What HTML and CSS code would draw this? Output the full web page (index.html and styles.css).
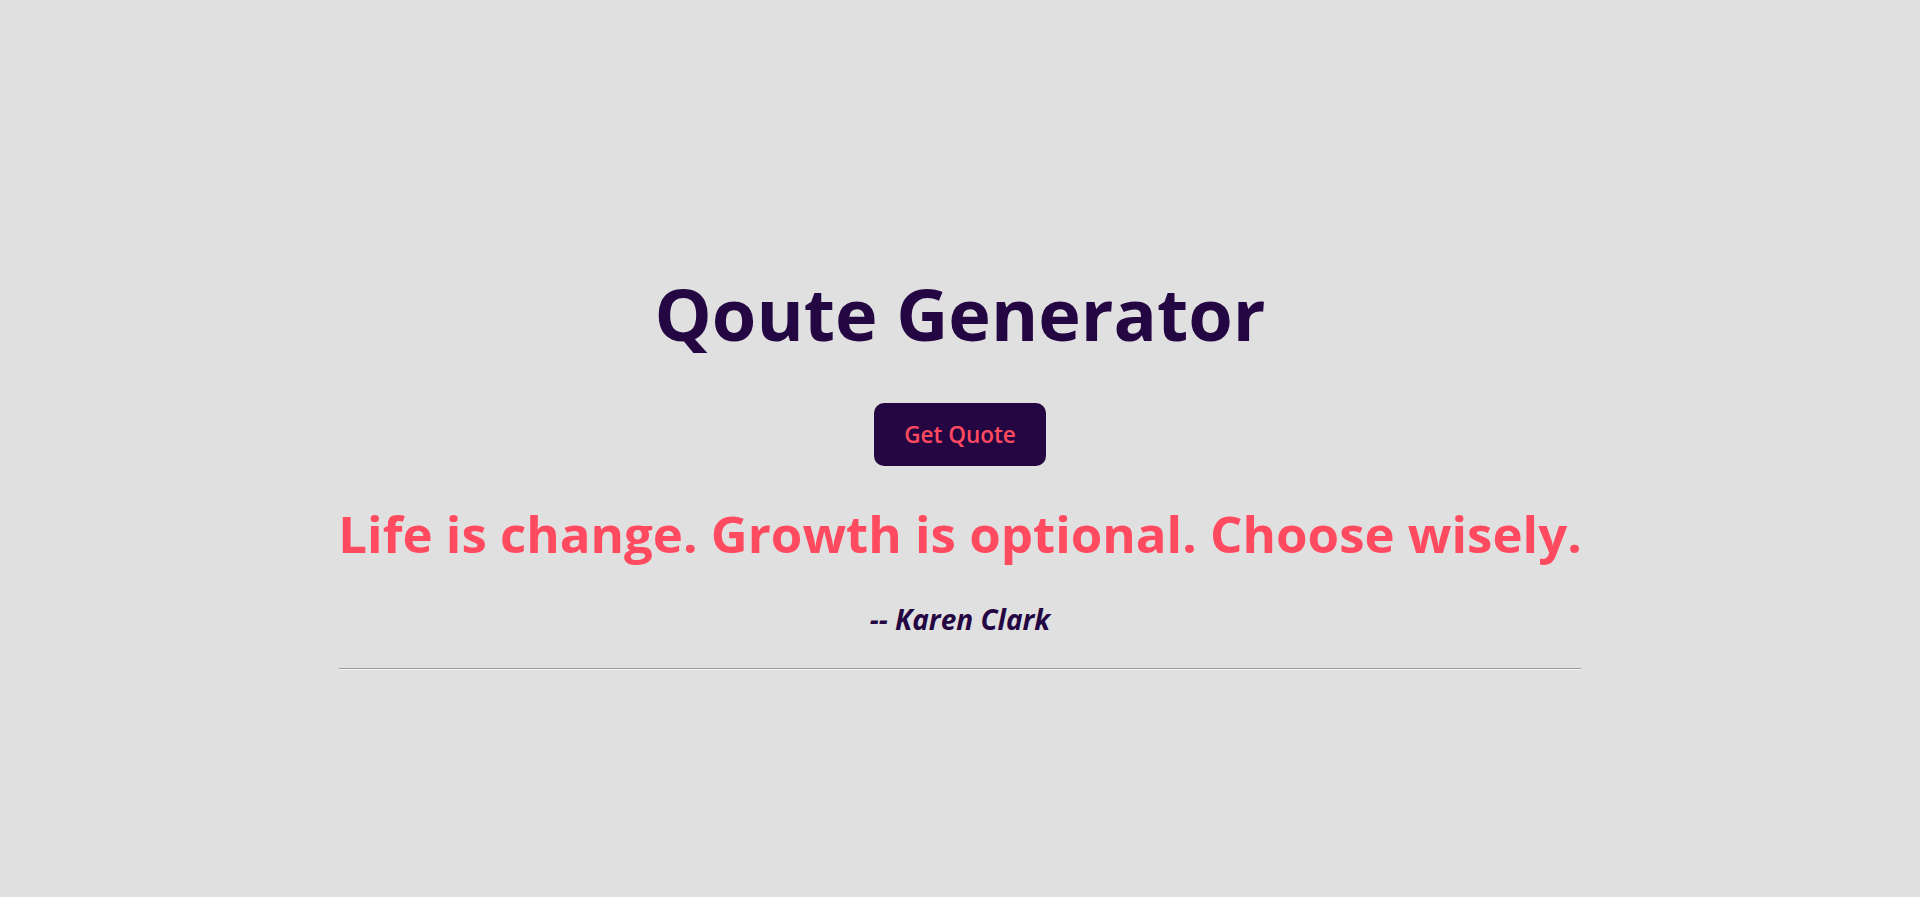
FILE: index.html
```html
<!DOCTYPE html>
<html lang="en">
<head>
<meta charset="utf-8">
<title>Qoute Generator</title>
<link rel="stylesheet" href="styles.css">
</head>
<body>
<main class="app">
  <h1 class="title">Qoute Generator</h1>
  <button class="btn" type="button">Get Quote</button>
  <h2 class="quote">Life is change. Growth is optional. Choose wisely.</h2>
  <p class="author">-- Karen Clark</p>
  <hr class="rule">
</main>
</body>
</html>
```

FILE: styles.css
```css
html, body {
  margin: 0;
  padding: 0;
}
body {
  background: #e0e0e0;
  font-family: "Open Sans", "Noto Sans", sans-serif;
  min-height: 897px;
}
.app {
  width: 1242px;
  margin: 0 auto;
  padding-top: 263px;
  display: flex;
  flex-direction: column;
  align-items: center;
}
.title {
  margin: 0;
  font-size: 72px;
  line-height: 100px;
  font-weight: 700;
  color: #240643;
}
.btn {
  margin-top: 40px;
  height: 63px;
  width: 172px;
  border: none;
  outline: none;
  border-radius: 10px;
  background: #240643;
  color: #ff4a5f;
  font-family: "Open Sans", "Noto Sans", sans-serif;
  font-size: 22.5px;
  font-weight: 600;
  padding: 0;
  cursor: pointer;
}
.quote {
  margin: 32px 0 0;
  font-size: 51px;
  line-height: 70px;
  font-weight: 700;
  color: #ff4a5f;
  text-align: center;
  white-space: nowrap;
}
.author {
  margin: 31px 0 0;
  font-size: 28px;
  line-height: 40px;
  font-weight: 700;
  font-style: italic;
  color: #240643;
}
.rule {
  align-self: stretch;
  margin: 29px 0 0;
  border: 0;
  border-top: 1px solid #9a9a9a;
  border-bottom: 1px solid #f4f4f4;
}
```
